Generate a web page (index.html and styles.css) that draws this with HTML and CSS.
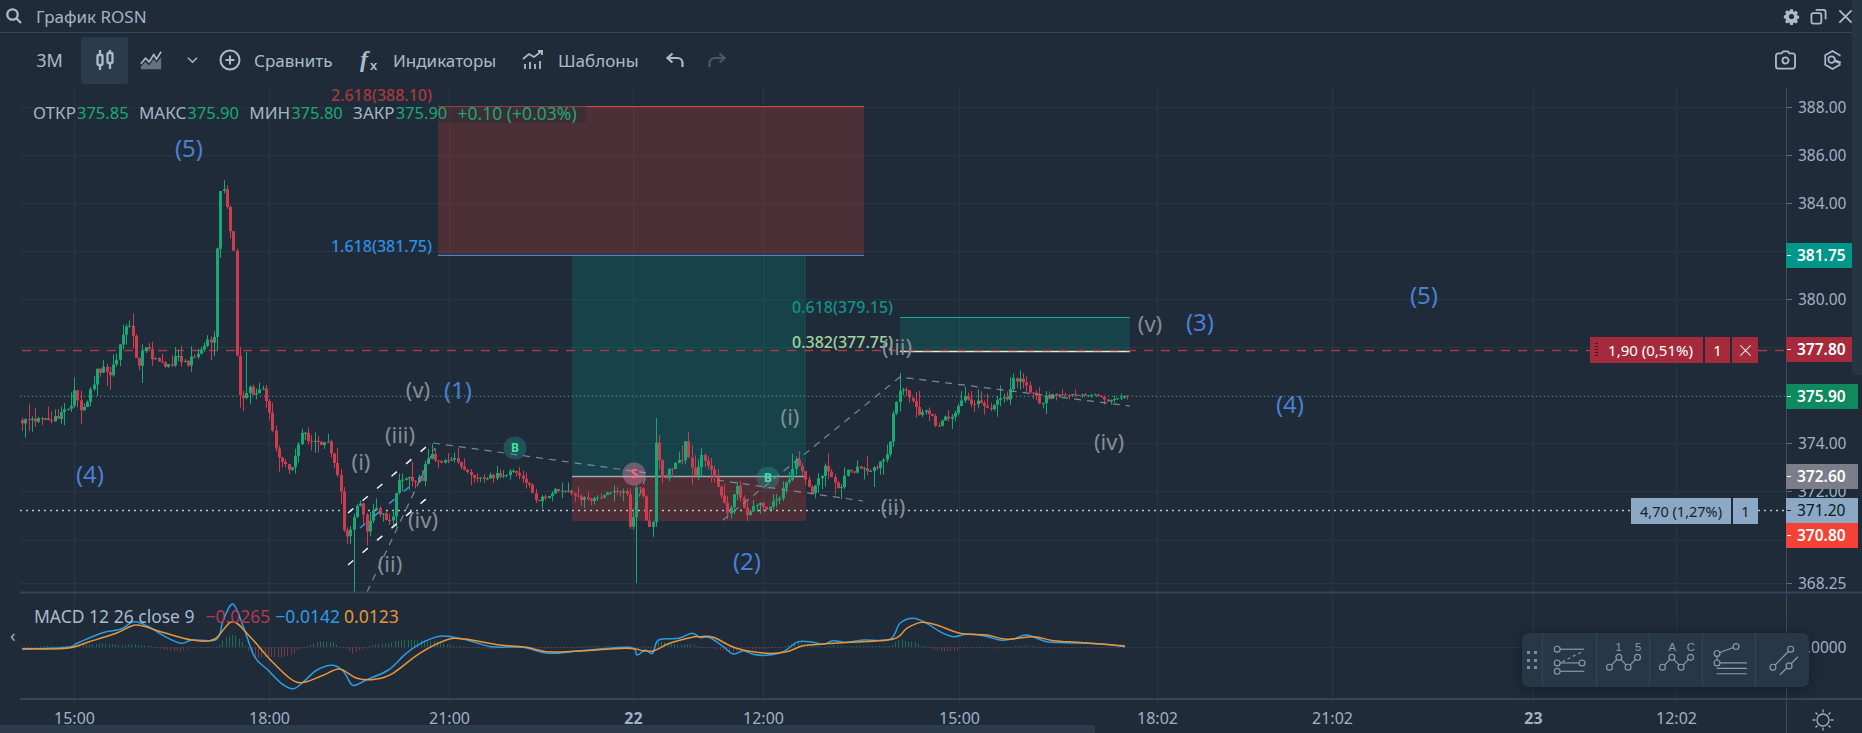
FILE: index.html
```html
<!DOCTYPE html>
<html lang="ru">
<head>
<meta charset="utf-8">
<title>График ROSN</title>
<link rel="stylesheet" href="styles.css">
</head>
<body>
<div class="app">
  <header class="titlebar">
    <div class="title-left">
      <svg class="ic-search" viewBox="0 0 18 18"><circle cx="7.5" cy="7.5" r="5.2"/><path d="M11.5 11.5 16 16"/></svg>
      <span class="title-text">График ROSN</span>
    </div>
    <div class="title-right">
      <svg class="ic-top" viewBox="0 0 18 18"><path class="solid" fill-rule="evenodd" d="M7.4 1h3.2l.5 2.2 1.3.6 2-1.2 2.2 2.3-1.2 1.9.5 1.4 2.1.5v3.1l-2.1.5-.5 1.3 1.2 2-2.2 2.2-2-1.2-1.3.5-.5 2.2H7.4l-.5-2.2-1.3-.5-2 1.2-2.2-2.2 1.2-2-.5-1.3L0 11.300V8.200l2.100-.5.500-1.400-1.200-1.900 2.200-2.300 2 1.200 1.300-.6zM9 6.500a3 3 0 1 0 0 6 3 3 0 0 0 0-6z" transform="translate(.9 .5) scale(.9)"/></svg>
      <svg class="ic-top" viewBox="0 0 18 18"><rect x="1.500" y="5.500" width="10.500" height="11" rx="2"/><path d="M6 2h8.500a2 2 0 0 1 2 2v8"/></svg>
      <svg class="ic-top" viewBox="0 0 18 18"><path d="M2.500 2.500l13 13M15.500 2.500l-13 13"/></svg>
    </div>
  </header>

  <nav class="toolbar">
    <div class="tool-group">
      <button class="tool tool-period">3M</button>
      <button class="tool tool-active">
        <svg class="ic-tool ic-candle" viewBox="0 0 20 22"><path d="M5 1v5M5 16v5M15 1v3M15 14v6"/><rect x="2.500" y="6" width="5" height="10" rx="1"/><rect x="12.500" y="4" width="5" height="10" rx="1"/></svg>
      </button>
      <button class="tool tool-area">
        <svg class="ic-tool ic-wide" viewBox="0 0 24 22"><path d="M1 15l5-6 4 4 5-8 3 5 5-8"/><path d="M1 21v-3l5-5 4 4 5-7 3 4 5-6v13z" class="tint"/></svg>
      </button>
      <button class="tool tool-chevron">
        <svg class="ic-chevron" viewBox="0 0 12 8"><path d="M1 1.500l5 5 5-5"/></svg>
      </button>
      <button class="tool tool-compare">
        <svg class="ic-tool ic-plus" viewBox="0 0 22 22"><circle cx="11" cy="11" r="9.500"/><path d="M11 6.500v9M6.500 11h9"/></svg>
        <span>Сравнить</span>
      </button>
      <button class="tool tool-ind">
        <svg class="ic-fx" viewBox="0 0 21 24"><text x="1" y="19" class="fx-f">f</text><text x="11" y="22" class="fx-x">x</text></svg>
        <span>Индикаторы</span>
      </button>
      <button class="tool tool-tpl">
        <svg class="ic-tool ic-wide" viewBox="0 0 22 20"><path d="M3 19v-5M8 19v-7M13 19v-5M18 19v-8"/><path d="M1 9l6-5 5 3 8-6"/><path d="M16 1h4v4"/></svg>
        <span>Шаблоны</span>
      </button>
      <button class="tool tool-undo">
        <svg class="ic-undo" viewBox="0 0 18 16"><path d="M6.500 1.500 1.500 6l5 4.500"/><path d="M1.500 6h10a5 5 0 0 1 5 5v4"/></svg>
      </button>
      <button class="tool tool-redo">
        <svg class="ic-undo ic-dim" viewBox="0 0 18 16"><path d="M11.500 1.500 16.500 6l-5 4.500"/><path d="M16.500 6h-10a5 5 0 0 0-5 5v4"/></svg>
      </button>
    </div>
    <div class="tool-right">
      <svg class="ic-side" viewBox="0 0 22 20"><path d="M7 3l1.500-2h5L15 3h3.500A2.500 2.500 0 0 1 21 5.500v11a2.500 2.500 0 0 1-2.500 2.500h-15A2.500 2.500 0 0 1 1 16.500v-11A2.500 2.500 0 0 1 3.500 3z"/><circle cx="11" cy="10.500" r="3.200"/></svg>
      <svg class="ic-side" viewBox="0 0 20 22"><path d="M18 7V5.800L10 1.200 2 5.800v10.400l8 4.600 8-4.600v-.7"/><circle cx="9" cy="10.500" r="3.600"/><path class="ic-thick" d="M12 11.500l7 2.800"/></svg>
    </div>
  </nav>

  <main class="chart">
    <svg id="plot" class="plot" viewBox="0 87 1862 646" width="1862" height="646" xmlns="http://www.w3.org/2000/svg">
      <g id="grid"></g>

      <rect class="fib-red" x="438" y="107" width="426" height="149"/>
      <rect class="fib-teal" x="572" y="256" width="234" height="220"/>
      <rect class="fib-red" x="572" y="476" width="234" height="45"/>
      <rect class="fib-teal" x="900" y="317" width="230" height="34"/>
      <path class="ln-red" d="M438 106.500H864"/>
      <path class="ln-blue" d="M438 255.500H864"/>
      <path class="ln-pale" d="M572 476.500H806"/>
      <path class="ln-teal" d="M900 317.500H1130"/>
      <path class="ln-cream" d="M900 351.500H1130"/>

      <path class="dash-red" d="M22 350.500H1590M1758 350.500H1786"/>
      <path class="dot-green" d="M20 396.500H1786"/>
      <path class="dot-white" d="M20 510.500H1631M1758 510.500H1786"/>

      <g id="candles"></g>

      <path class="wave" d="M367 592 435 448M433 443 647 473 633 515M717 480 863 501M723 520 900 377 1130 406"/>
      <path class="channel" d="M348 513 432 442M348 565 433 493"/>
      <path class="channel-blue" d="M360 528 433 467"/>

      <g class="mark-buy"><circle cx="515" cy="448" r="11.500"/><text x="515" y="452">B</text></g>
      <g class="mark-sell"><circle cx="634" cy="474" r="11.500"/><text x="634" y="478">S</text></g>
      <g class="mark-buy"><circle cx="768" cy="478" r="11.500"/><text x="768" y="482">B</text></g>

      <text class="fib-label c-red" x="432" y="101" text-anchor="end">2.618(388.10)</text>
      <text class="fib-label c-blue" x="432" y="252" text-anchor="end">1.618(381.75)</text>
      <text class="fib-label c-teal" x="792" y="313">0.618(379.15)</text>
      <text class="fib-label c-lime" x="792" y="348">0.382(377.75)</text>

      <g class="wave-blue">
        <text x="189" y="157">(5)</text><text x="90" y="483">(4)</text><text x="458" y="399">(1)</text>
        <text x="747" y="570">(2)</text><text x="1200" y="331">(3)</text><text x="1290" y="413">(4)</text><text x="1424" y="304">(5)</text>
      </g>
      <g class="wave-grey">
        <text x="418" y="398">(v)</text><text x="400" y="443">(iii)</text><text x="361" y="470">(i)</text>
        <text x="423" y="528">(iv)</text><text x="390" y="572">(ii)</text><text x="790" y="425">(i)</text>
        <text x="897" y="355">(iii)</text><text x="893" y="515">(ii)</text><text x="1150" y="332">(v)</text><text x="1109" y="450">(iv)</text>
      </g>

      <g id="macd"></g>
      <g id="axis"></g>
      <text class="macd-collapse" x="10" y="642">‹</text>
      <g class="sun"><circle cx="1823" cy="720" r="6"/><path d="M1823 709.500v3M1823 727.500v3M1812.500 720h3M1830.500 720h3M1815.500 712.500l2 2M1828.500 725.500l2 2M1830.500 712.500l-2 2M1817.500 725.500l-2 2"/></g>
    </svg>

    <div class="ohlc">
      <span class="o-key">ОТКР</span><span class="o-val">375.85</span>
      <span class="o-key">МАКС</span><span class="o-val">375.90</span>
      <span class="o-key">МИН</span><span class="o-val">375.80</span>
      <span class="o-key">ЗАКР</span><span class="o-val">375.90</span>
      <span class="o-chg">+0.10 (+0.03%)</span>
    </div>

    <div class="macd-legend">
      <span class="m-name">MACD 12 26 close 9</span>
      <span class="m-red">−0.0265</span><span class="m-blue">−0.0142</span><span class="m-orange">0.0123</span>
    </div>

    <div class="order order-red">
      <span class="order-main"><i class="order-grip"></i>1,90 (0,51%)</span>
      <span class="order-qty">1</span>
      <span class="order-x"><svg viewBox="0 0 14 14"><path d="M1.500 1.500l11 11M12.500 1.500l-11 11"/></svg></span>
    </div>
    <div class="order order-blue">
      <span class="order-main">4,70 (1,27%)</span>
      <span class="order-qty">1</span>
    </div>

    <div class="tools-panel">
      <div class="tp-grip"><i></i><i></i><i></i><i></i><i></i><i></i></div>
      <div class="tp-cell tp-w54">
        <svg viewBox="1542 633 54 54"><circle cx="1556.500" cy="649" r="3"/><path d="M1559.500 649h24.500"/><circle cx="1556.500" cy="663" r="3"/><path d="M1559.500 663h19"/><circle cx="1581.700" cy="663" r="3"/><circle cx="1556.500" cy="671.500" r="3"/><path d="M1559.500 671.500h24.500"/><path class="dashed" d="M1561.700 661.700 1581.700 651.700"/></svg>
      </div>
      <div class="tp-cell tp-w53">
        <svg viewBox="1596 633 53 54"><text x="1618" y="651">1</text><text x="1638" y="651">5</text><path d="M1610.800 665.200 1616.200 659.400M1620.400 659.400 1625.600 665.200M1629.800 665.200 1635.200 659.400"/><circle cx="1608.700" cy="667.300" r="3"/><circle cx="1618.300" cy="657.300" r="3"/><circle cx="1627.700" cy="667.300" r="3"/><circle cx="1637.300" cy="657.300" r="3"/></svg>
      </div>
      <div class="tp-cell tp-w53">
        <svg viewBox="1649 633 53 54"><text x="1671.700" y="651">A</text><text x="1690.700" y="651">C</text><path d="M1663.800 665.200 1669.200 659.400M1673.400 659.400 1678.600 665.200M1682.800 665.200 1688.200 659.400"/><circle cx="1661.700" cy="667.300" r="3"/><circle cx="1671.300" cy="657.300" r="3"/><circle cx="1680.700" cy="667.300" r="3"/><circle cx="1690.300" cy="657.300" r="3"/></svg>
      </div>
      <div class="tp-cell tp-w53">
        <svg viewBox="1702 633 53 54"><circle cx="1716.300" cy="653.300" r="3"/><circle cx="1735.700" cy="646.300" r="3"/><path d="M1719.200 652.300 1732.900 647.300M1716.300 656.300v3.700"/><circle cx="1716.300" cy="663" r="3"/><path d="M1719.300 663h27.400M1716 668.500h30.700M1716 674h30.700"/></svg>
      </div>
      <div class="tp-cell tp-w54">
        <svg viewBox="1755 633 54 54"><circle cx="1790.300" cy="649" r="3"/><circle cx="1772.300" cy="667.300" r="3"/><path d="M1774.400 665.200 1788.200 651.100"/><circle cx="1788.700" cy="666" r="3"/><path d="M1779.300 675 1786.500 668.200M1790.900 663.800 1797.700 656.700"/></svg>
      </div>
    </div>
  </main>

  <div class="scroll-right"></div>
  <div class="scroll-bottom"></div>
</div>
<script src="chart.js"></script>
</body>
</html>
```

FILE: styles.css
```css
* { box-sizing: border-box; }
html, body { margin: 0; padding: 0; height: 100%; overflow: hidden; background: #1f2b39; }
body { font-family: "Noto Sans", "Open Sans", sans-serif; color: #a9bbcc; }
.app { position: relative; display: flex; flex-direction: column; height: 733px; width: 1862px; overflow: hidden; }

.titlebar { display: flex; justify-content: space-between; align-items: center; height: 33px; flex: none; border-bottom: 1px solid #33465a; padding: 0 8px 0 5px; }
.title-left { display: flex; align-items: center; gap: 13px; }
.title-text { font-size: 17px; color: #a3b4c5; }
.ic-search { width: 18px; height: 18px; fill: none; stroke: #a9bccd; stroke-width: 2.300; }
.title-right { display: flex; align-items: center; gap: 10px; }
.ic-top { width: 17px; height: 17px; fill: none; stroke: #a9bccd; stroke-width: 1.900; }
.ic-top .solid { fill: #a9bccd; stroke: none; }

.toolbar { display: flex; justify-content: space-between; align-items: center; height: 54px; flex: none; padding-right: 19px; }
.tool-group { display: flex; align-items: center; height: 47px; }
.tool { display: flex; align-items: center; justify-content: center; height: 47px; border: 0; background: none; padding: 0; color: #a9bbcc; font: 17px "Noto Sans", "Open Sans", sans-serif; gap: 13px; white-space: nowrap; }
.tool-period { width: 81px; padding-left: 18px; font-size: 18px; }
.tool-active { width: 47px; background: #2c3b4c; border-radius: 3px; }
.tool-area { width: 56px; padding-left: 12px; justify-content: flex-start; }
.tool-chevron { width: 35px; padding-right: 2px; padding-left: 3px; justify-content: flex-start; }
.tool-compare { width: 140px; justify-content: flex-start; }
.tool-ind { width: 163px; justify-content: flex-start; }
.tool-tpl { width: 144px; justify-content: flex-start; gap: 14px; }
.tool-undo { width: 42px; justify-content: flex-start; }
.tool-redo { width: 20px; justify-content: flex-start; }
.ic-tool { width: 20px; height: 22px; fill: none; stroke: #a9bccd; stroke-width: 1.800; flex: none; }
.ic-candle { stroke-width: 2.300; }
.ic-wide { width: 22px; }
.ic-plus { width: 22px; stroke-width: 2; }
.tint { fill: #a9bccd; fill-opacity: .5; stroke: none; }
.ic-chevron { width: 11px; height: 8px; fill: none; stroke: #a9bccd; stroke-width: 1.500; }
.ic-fx { width: 21px; height: 24px; flex: none; fill: #a9bccd; overflow: visible; }
.fx-f { font: italic bold 24px "Liberation Serif", serif; }
.fx-x { font: bold 13px "Liberation Sans", sans-serif; }
.ic-undo { width: 18px; height: 16px; fill: none; stroke: #a9bccd; stroke-width: 2.200; }
.ic-dim { stroke: #46586b; }
.tool-right { display: flex; align-items: center; gap: 26px; }
.ic-side { width: 21px; height: 20px; fill: none; stroke: #a9bccd; stroke-width: 1.900; }
.ic-thick { stroke-width: 3; }

.chart { position: relative; flex: 1; min-height: 0; }
.plot { display: block; position: relative; overflow: visible; }
.plot text { font-family: "Noto Sans", "Open Sans", sans-serif; }

.grid-line { stroke: #283644; stroke-width: 1; }
.pane-line { stroke: #33455a; stroke-width: 2; }
.axis-line { stroke: #3a4c5f; stroke-width: 1; }
.tick { stroke: #5c6f83; stroke-width: 1; }

.fib-red { fill: #f44336; fill-opacity: .21; }
.fib-teal { fill: #009688; fill-opacity: .22; }
.ln-red { stroke: #e0453a; stroke-width: 1; }
.ln-blue { stroke: #2f8fe0; stroke-width: 1; }
.ln-pale { stroke: #a3a8b0; stroke-width: 1.500; }
.ln-teal { stroke: #1ea89c; stroke-width: 1; }
.ln-cream { stroke: #e2ecc8; stroke-width: 1.500; }
.dash-red { stroke: #a83a48; stroke-width: 1.600; stroke-dasharray: 9 8; fill: none; }
.dot-green { stroke: #3f9a90; stroke-width: 1; stroke-dasharray: 1 3; }
.dot-white { stroke: #b7c4cf; stroke-width: 1.300; stroke-dasharray: 2 4; }

.up-wick { stroke: #18a873; stroke-width: 1; }
.dn-wick { stroke: #cf3c50; stroke-width: 1; }
.up-body { fill: #18a873; }
.dn-body { fill: #cf3c50; }

.wave { fill: none; stroke: #7d8893; stroke-width: 1.200; stroke-dasharray: 7 6; }
.channel { fill: none; stroke: #f2f5f8; stroke-width: 1.500; stroke-dasharray: 7 12; }
.channel-blue { fill: none; stroke: #3c93dc; stroke-width: 1.500; stroke-dasharray: 7 12; }

.mark-buy circle { fill: #26a69a; fill-opacity: .32; }
.mark-buy text { fill: #3fe3a6; font-size: 12px; font-weight: 700; text-anchor: middle; }
.mark-sell circle { fill: #f48fb1; fill-opacity: .38; }
.mark-sell text { fill: #ff6b80; font-size: 12px; font-weight: 700; text-anchor: middle; }

.fib-label { font-size: 16px; font-weight: 500; }
.c-red { fill: #a83a3a; }
.c-blue { fill: #2f8fe0; }
.c-teal { fill: #0f9488; }
.c-lime { fill: #a3d39c; }
.wave-blue text { font-size: 24px; fill: #4a7fd1; text-anchor: middle; }
.wave-grey text { font-size: 22px; fill: #858d96; text-anchor: middle; }

.macd-blue { fill: none; stroke: #2d9de0; stroke-width: 1.500; stroke-linejoin: round; }
.macd-orange { fill: none; stroke: #e8963a; stroke-width: 1.500; stroke-linejoin: round; }
.hist-up { stroke: #1c6f56; stroke-width: 1; }
.hist-dn { stroke: #743a4c; stroke-width: 1; }
.macd-collapse { font-size: 18px; fill: #9fb2c5; }

.ax-price { font-size: 15.500px; fill: #9fb2c6; }
.ax-time { font-size: 16px; fill: #9fb2c6; text-anchor: middle; }
.ax-time-day { font-weight: 700; }
.pill-text { font-size: 15.500px; font-weight: 600; fill: #ffffff; }
.pill-text-dark { fill: #0f1720; font-weight: 400; }
.sun { fill: none; stroke: #9fb2c6; stroke-width: 1.300; }

.ohlc { position: absolute; left: 33px; top: 16px; display: flex; padding-right: 9px; font-size: 17px; line-height: 20px; white-space: nowrap; background: rgba(31, 43, 57, .35); }
.o-key { color: #a3b6c8; margin-right: 1px; }
.o-val { color: #1aa874; margin-right: 10.300px; font-size: 16.500px; }
.o-chg { color: #1aa874; font-size: 17.500px; }

.macd-legend { position: absolute; left: 34px; top: 519px; display: flex; font-size: 17.500px; line-height: 20px; white-space: nowrap; }
.m-name { color: #a9bbcc; }
.m-red { color: #b23a50; margin-left: 11px; }
.m-blue { color: #2d9de0; margin-left: 5px; }
.m-orange { color: #e8963a; margin-left: 4px; }

.order { position: absolute; display: flex; height: 26px; gap: 2px; font-size: 15px; line-height: 26px; white-space: nowrap; }
.order-red { left: 1590px; top: 250px; color: #fff; }
.order-red span { background: #a52b3c; }
.order-blue { left: 1631px; top: 411px; color: #18222c; font-size: 14.500px; }
.order-blue span { background: #8ba9c4; }
.order-main { position: relative; display: block; text-align: center; }
.order-red .order-main { width: 113px; padding-left: 8px; }
.order-blue .order-main { width: 100px; }
.order-qty { width: 25px; text-align: center; }
.order-x { width: 26px; display: flex; align-items: center; justify-content: center; }
.order-x svg { width: 13px; height: 13px; fill: none; stroke: #f3e2e5; stroke-width: 1.200; }
.order-grip { position: absolute; left: 5px; top: 6px; width: 3px; height: 14px; background: repeating-linear-gradient(#3a1c24 0 1px, transparent 1px 3px); }

.tools-panel { position: absolute; left: 1522px; top: 546px; display: flex; height: 54px; background: #283747; border-radius: 7px; box-shadow: 0 2px 12px rgba(10, 16, 24, .45); }
.tp-grip { width: 20px; display: grid; grid-template-columns: 3px 3px; grid-auto-rows: 3px; gap: 4.500px 4px; align-content: center; justify-content: center; }
.tp-grip i { background: #7c8c9c; }
.tp-cell { border-left: 1px solid #334455; }
.tp-w54 { width: 54px; }
.tp-w53 { width: 53px; }
.tp-cell svg { display: block; width: 100%; height: 100%; fill: none; stroke: #8a9aa9; stroke-width: 1.200; }
.tp-cell text { font: 11.500px "Liberation Sans", sans-serif; fill: #8a9aa9; stroke: none; text-anchor: middle; }
.dashed { stroke-dasharray: 3 3; }

.scroll-right { position: absolute; right: 0; top: 0; width: 10px; height: 375px; background: #263544; border-radius: 0 0 0 4px; }
.scroll-bottom { position: absolute; left: 0; bottom: 0; width: 1095px; height: 8px; background: #2d3c4c; }
```

FILE: chart.js
```javascript
(function () {
  var NS = "http://www.w3.org/2000/svg";
  function el(parent, tag, cls, attrs, text) {
    var n = document.createElementNS(NS, tag);
    if (cls) n.setAttribute("class", cls);
    for (var k in attrs) n.setAttribute(k, attrs[k]);
    if (text !== undefined) n.textContent = text;
    parent.appendChild(n);
    return n;
  }
  var seed = 12345;
  function rnd() {
    seed |= 0; seed = seed + 0x6D2B79F5 | 0;
    var t = Math.imul(seed ^ seed >>> 15, 1 | seed);
    t = t + Math.imul(t ^ t >>> 7, 61 | t) ^ t;
    return ((t ^ t >>> 14) >>> 0) / 4294967296;
  }
  function lerp(pts, x) {
    if (x <= pts[0][0]) return pts[0][1];
    for (var i = 1; i < pts.length; i++) {
      if (x <= pts[i][0]) {
        var a = pts[i - 1], b = pts[i];
        return a[1] + (b[1] - a[1]) * (x - a[0]) / (b[0] - a[0]);
      }
    }
    return pts[pts.length - 1][1];
  }

  /* grid */
  var grid = document.getElementById("grid");
  var vx = [74.5, 269.5, 449.5, 633.5, 763.5, 959.5, 1157.5, 1332.5, 1533.5, 1676.5];
  vx.forEach(function (x) {
    el(grid, "line", "grid-line", { x1: x, x2: x, y1: 88, y2: 704 });
  });
  [107, 155, 203, 251, 299, 347, 395, 443, 491, 540, 583].forEach(function (y) {
    el(grid, "line", "grid-line", { x1: 20, x2: 1786, y1: y + .5, y2: y + .5 });
  });
  el(grid, "line", "grid-line", { x1: 20, x2: 1786, y1: 647.5, y2: 647.5 });

  /* price candles */
  var path = [[22,420],[45,421],[60,417],[74,408],[78,388],[84,410],[92,395],[100,372],[107,370],[113,373],[119,358],[125,342],[130,323],[136,335],[141,372],[146,345],[152,352],[156,362],[165,360],[172,368],[180,355],[190,365],[200,352],[208,342],[217,338],[219,280],[223,190],[228,187],[232,234],[236,235],[238,300],[241,395],[246,398],[252,387],[258,395],[266,390],[272,410],[278,450],[285,462],[293,470],[300,452],[306,427],[312,440],[320,443],[330,440],[337,460],[343,480],[346,525],[350,535],[354,530],[358,510],[362,503],[366,515],[370,530],[376,510],[385,512],[392,520],[398,510],[400,480],[405,477],[415,480],[425,478],[429,465],[433,456],[440,460],[450,462],[458,460],[466,468],[475,478],[490,478],[500,475],[510,473],[520,472],[525,480],[533,487],[538,502],[545,497],[553,495],[560,490],[567,489],[577,497],[585,498],[593,502],[600,498],[607,494],[620,492],[630,493],[634,540],[640,483],[645,490],[650,523],[656,525],[657,430],[660,452],[667,487],[672,470],[680,460],[684,462],[688,442],[697,480],[705,455],[712,468],[720,483],[726,500],[732,517],[740,482],[745,500],[750,513],[757,503],[770,510],[780,498],[787,490],[798,462],[804,470],[810,487],[815,493],[828,468],[836,480],[843,490],[850,472],[867,467],[877,470],[892,455],[894,425],[898,403],[903,388],[913,397],[923,417],[930,407],[940,430],[947,418],[957,415],[967,397],[977,402],[992,410],[1000,400],[1010,397],[1017,377],[1030,387],[1045,403],[1053,395],[1077,395],[1103,395],[1110,402],[1127,397]];
  var lowWick = { 353: 592, 636: 583, 142: 383, 237: 333 };
  var highWick = { 657: 418, 247: 352, 227: 185, 900: 373 };
  var up = "", dn = "", upW = "", dnW = "";
  var prev = lerp(path, 22);
  for (var x = 22; x <= 1127; x += 3.25) {
    var amp = x > 1050 ? 1.2 : (x > 433 && x < 630 ? 2.2 : 3.5);
    var close = lerp(path, x + 3.25) + (rnd() - .5) * amp * 2;
    var open = prev;
    var isUp = close <= open;
    var top = Math.min(open, close), bot = Math.max(open, close);
    var h = Math.max(1, bot - top);
    var wt = top - rnd() * rnd() * (amp * 5), wb = bot + rnd() * rnd() * (amp * 5);
    var cx = Math.round(x) + .5;
    var key;
    for (key in lowWick) { if (Math.abs(x - key) < 1.7) wb = lowWick[key]; }
    for (key in highWick) { if (Math.abs(x - key) < 1.7) wt = highWick[key]; }
    var w = "M" + cx + " " + wt.toFixed(1) + "V" + wb.toFixed(1);
    var b = "M" + (cx - 1.5) + " " + top.toFixed(1) + "h3v" + h.toFixed(1) + "h-3z";
    if (isUp) { upW += w; up += b; } else { dnW += w; dn += b; }
    prev = close;
  }
  var c = document.getElementById("candles");
  el(c, "path", "up-wick", { d: upW });
  el(c, "path", "dn-wick", { d: dnW });
  el(c, "path", "up-body", { d: up });
  el(c, "path", "dn-body", { d: dn });

  /* MACD */
  function z8(a) { return a.map(function (p) { return [p[0] / 2.24, 590 + p[1] / 3]; }); }
  function z9(a) { return a.map(function (p) { return [700 + p[0] / 3, 590 + p[1] / 3]; }); }
  var blue = z8([[50,178],[150,172],[175,158],[230,128],[270,118],[300,95],[330,108],[370,140],[405,160],[430,150],[485,148],[500,90],[522,42],[545,110],[570,200],[600,240],[630,280],[657,296],[680,275],[710,240],[745,226],[770,245],[790,286],[820,270],[870,240],[910,190],[950,155],[990,138],[1040,148],[1100,170],[1170,172],[1230,190],[1300,182],[1410,172],[1427,195],[1445,180],[1462,190],[1475,150],[1520,145],[1550,130]]).concat(
    z9([[0,142],[30,143],[70,170],[100,192],[130,182],[160,193],[200,196],[250,185],[295,155],[340,157],[370,163],[400,152],[440,157],[490,150],[570,148],[600,100],[640,85],[680,100],[720,125],[760,140],[800,133],[850,137],[900,150],[940,147],[980,135],[1040,155],[1100,158],[1200,162],[1275,170]]));
  var orange = z8([[50,176],[150,175],[200,155],[260,130],[305,105],[360,125],[430,150],[480,148],[520,95],[560,140],[610,215],[665,277],[720,258],[760,237],[800,265],[840,268],[880,250],[940,190],[1000,150],[1040,147],[1120,165],[1180,172],[1240,186],[1400,175],[1440,182],[1465,182],[1500,160],[1550,142]]).concat(
    z9([[0,140],[40,142],[110,175],[200,190],[260,185],[310,167],[370,162],[450,157],[580,147],[620,115],[665,97],[710,105],[780,130],[860,135],[920,148],[1000,140],[1060,152],[1150,158],[1275,168]]));
  function smooth(a) {
    var d = "M" + a[0][0].toFixed(1) + " " + a[0][1].toFixed(1);
    for (var i = 0; i < a.length - 1; i++) {
      var p0 = a[Math.max(i - 1, 0)], p1 = a[i], p2 = a[i + 1], p3 = a[Math.min(i + 2, a.length - 1)];
      d += "C" + (p1[0] + (p2[0] - p0[0]) / 6).toFixed(1) + " " + (p1[1] + (p2[1] - p0[1]) / 6).toFixed(1) + " " +
        (p2[0] - (p3[0] - p1[0]) / 6).toFixed(1) + " " + (p2[1] - (p3[1] - p1[1]) / 6).toFixed(1) + " " +
        p2[0].toFixed(1) + " " + p2[1].toFixed(1);
    }
    return d;
  }
  var m = document.getElementById("macd");
  var hu = "", hd = "";
  for (var hx = 24; hx < 1125; hx += 3.25) {
    var d = (lerp(orange, hx) - lerp(blue, hx)) * .75;
    var X = Math.round(hx) + .5;
    var h2 = Math.abs(d) < 1 ? 1 : Math.abs(d);
    if (d >= 0) hu += "M" + X + " 647V" + (647 - h2).toFixed(1);
    else hd += "M" + X + " 647V" + (647 + h2).toFixed(1);
  }
  el(m, "path", "hist-up", { d: hu });
  el(m, "path", "hist-dn", { d: hd });
  el(m, "path", "macd-blue", { d: smooth(blue) });
  el(m, "path", "macd-orange", { d: smooth(orange) });

  /* axes */
  var a = document.getElementById("axis");
  el(a, "line", "axis-line", { x1: 1786.5, x2: 1786.5, y1: 88, y2: 733 });
  el(a, "line", "pane-line", { x1: 20, x2: 1862, y1: 592.5, y2: 592.5 });
  el(a, "line", "pane-line", { x1: 20, x2: 1862, y1: 699, y2: 699 });
  [["388.00",107],["386.00",155],["384.00",203],["380.00",299],["374.00",443],["372.00",491],["368.25",583],["0.0000",647]].forEach(function (l) {
    el(a, "line", "tick", { x1: 1787, x2: 1792, y1: l[1] + .5, y2: l[1] + .5 });
    el(a, "text", "ax-price", { x: 1798, y: l[1] + 6 }, l[0]);
  });
  [["381.75",243,"#00968a",0],["377.80",337,"#a52b3c",0],["375.90",384,"#0f8a5f",0],["372.60",464,"#7b7d88",0],["371.20",498,"#8ba9c4",1],["370.80",523,"#f44336",0]].forEach(function (p) {
    el(a, "rect", "", { x: 1786, y: p[1], width: 72, height: 25, fill: p[2] });
    el(a, "line", "", { x1: 1787, x2: 1791, y1: p[1] + 12.5, y2: p[1] + 12.5, stroke: p[3] ? "#1a2530" : "#ffffff" });
    el(a, "text", "pill-text" + (p[3] ? " pill-text-dark" : ""), { x: 1797, y: p[1] + 18 }, p[0]);
  });
  [["15:00",74.5],["18:00",269.5],["21:00",449.5],["22",633.5,1],["12:00",763.5],["15:00",959.5],["18:02",1157.5],["21:02",1332.5],["23",1533.5,1],["12:02",1676.5]].forEach(function (t) {
    el(a, "text", "ax-time" + (t[2] ? " ax-time-day" : ""), { x: t[1], y: 724 }, t[0]);
  });
})();
```
